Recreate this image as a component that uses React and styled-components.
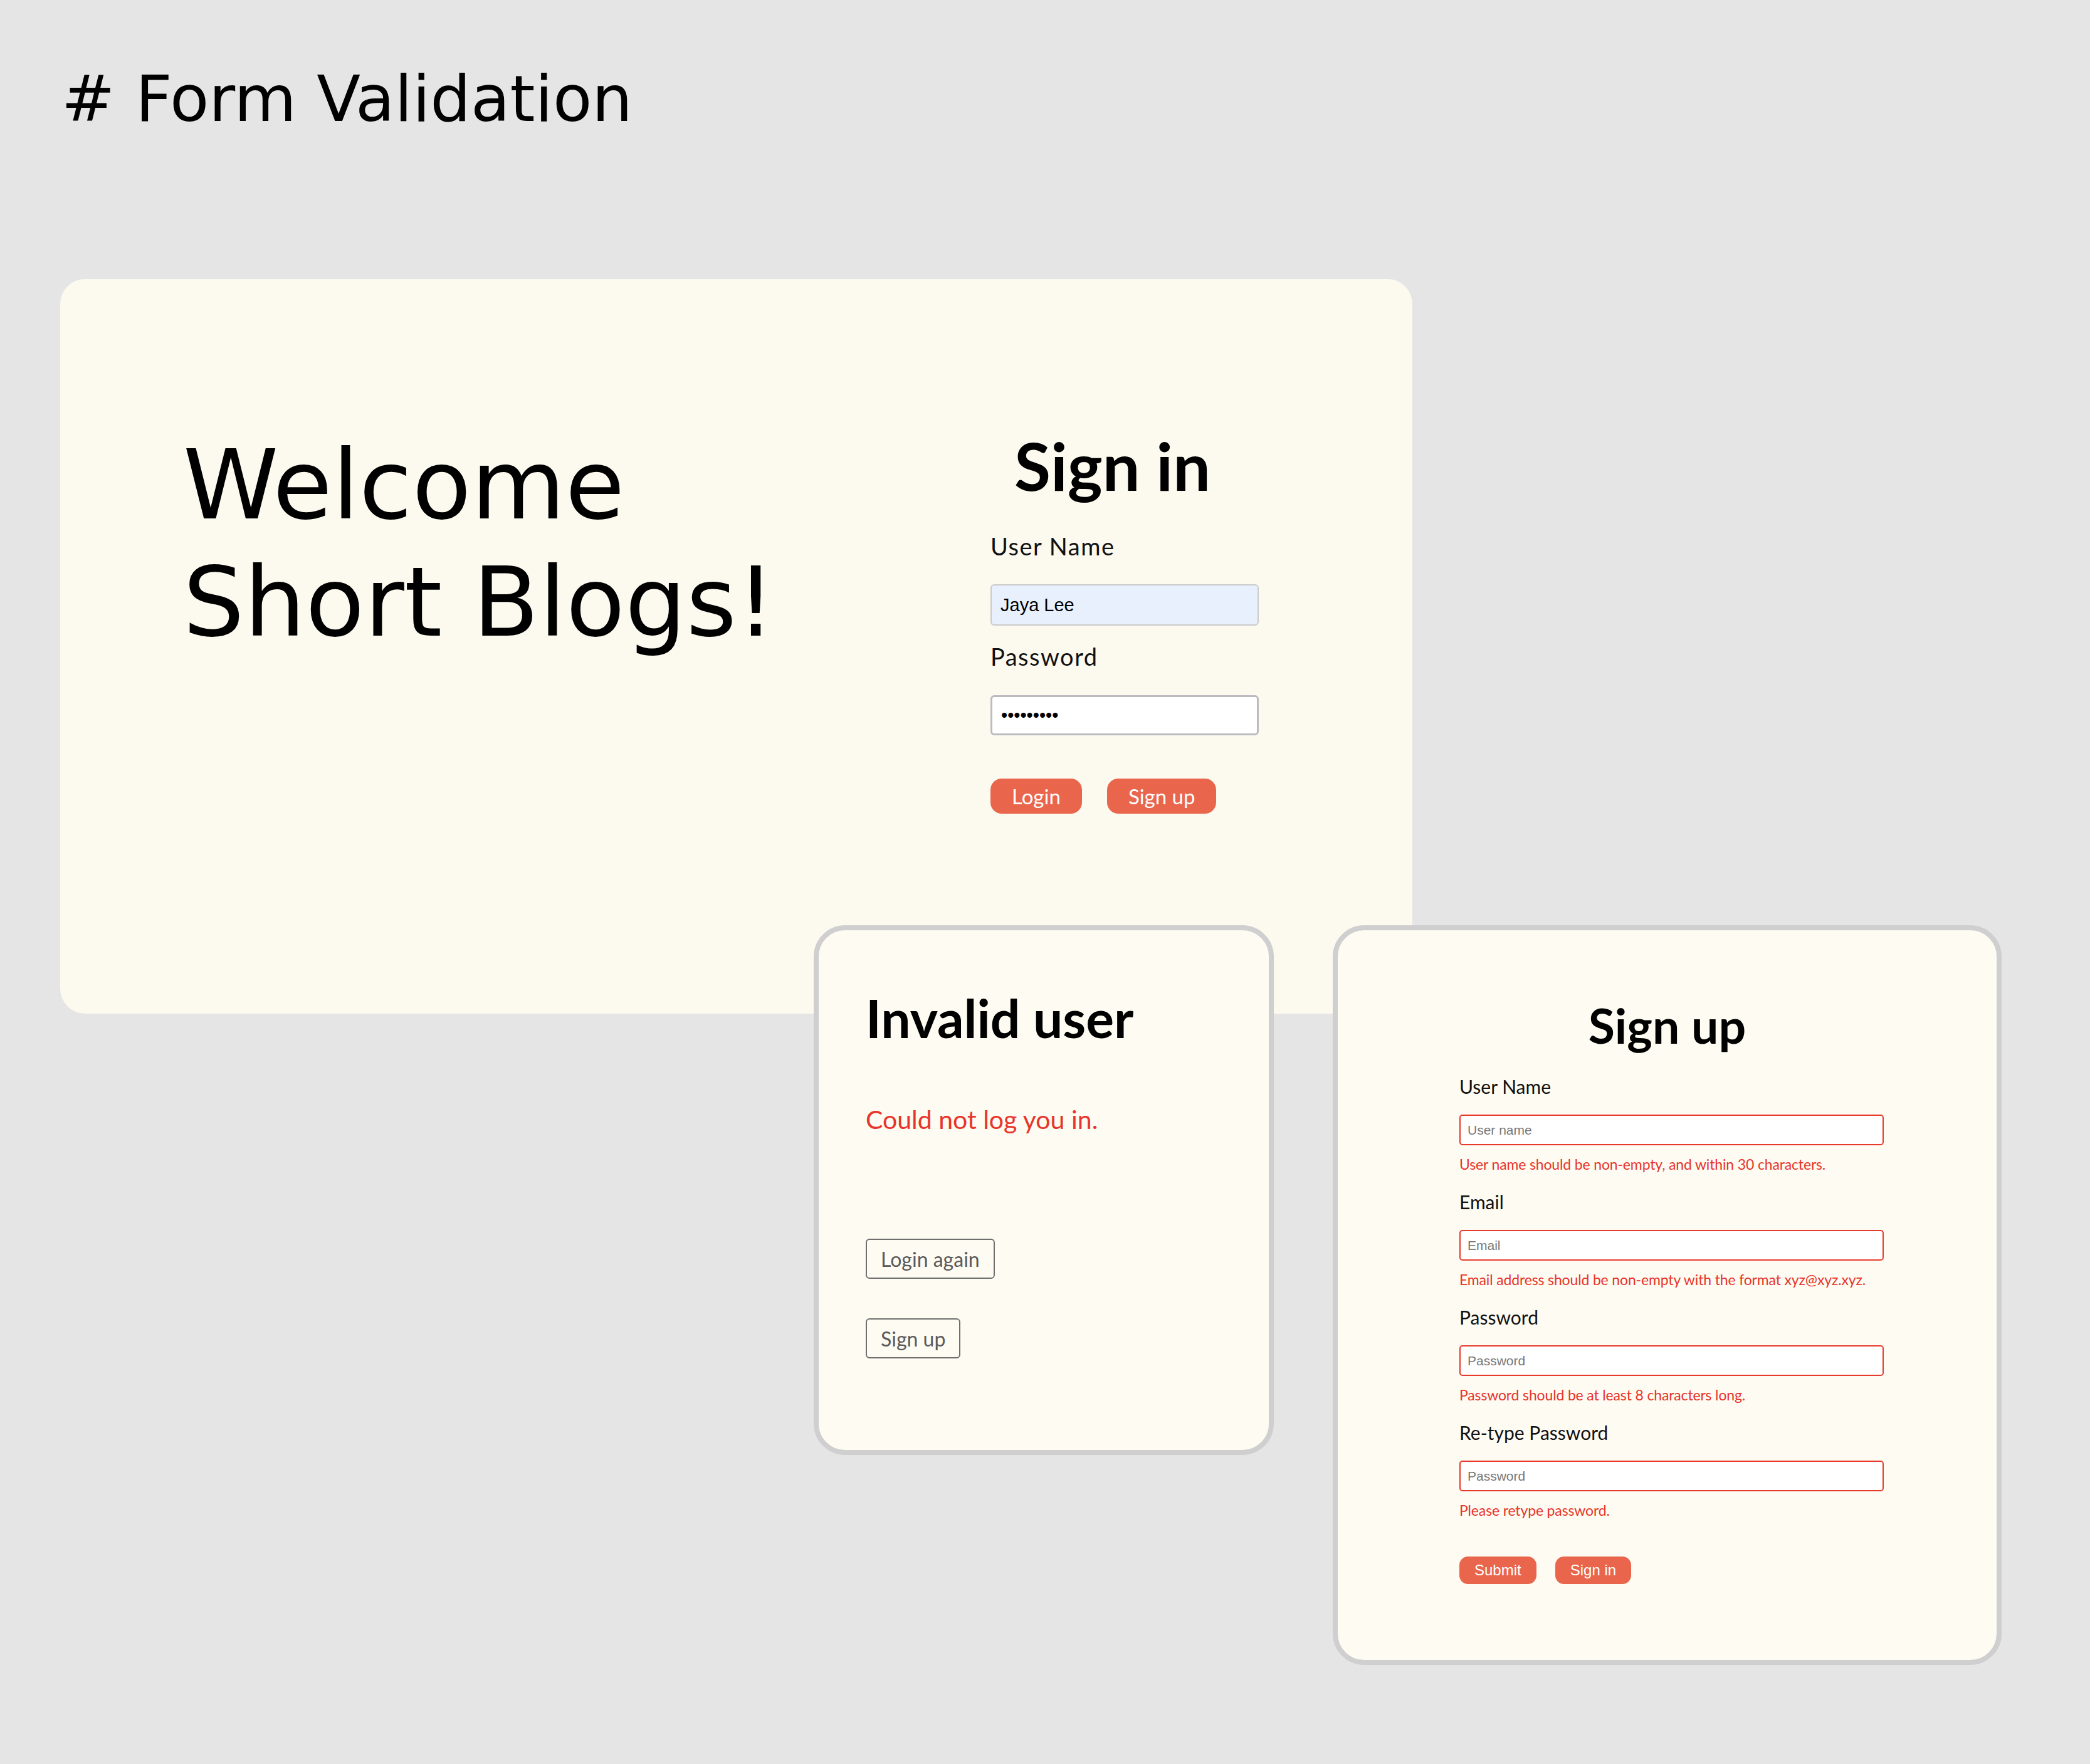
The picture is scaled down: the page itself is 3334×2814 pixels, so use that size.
import React from 'react'
import styled, { createGlobalStyle } from 'styled-components'

const GlobalStyle = createGlobalStyle`
  html, body {
    margin: 0;
    padding: 0;
    background: #e5e5e5;
  }
  * {
    box-sizing: border-box;
  }
`

const Page = styled.div`
  min-height: 2814px;
  padding: 107px 0 0 96px;
`

const PageTitle = styled.h1`
  margin: 0 0 0 2px;
  font-family: 'DejaVu Sans', sans-serif;
  font-weight: 400;
  font-size: 102px;
  line-height: 101px;
  color: #000;
`

const Stage = styled.div`
  margin-top: 237px;
`

const HeroCard = styled.section`
  width: 2157px;
  height: 1172px;
  padding: 235px 0 0 196px;
  border-radius: 40px;
  background: #fcf9ef;
  display: grid;
  grid-template-columns: 1288px 428px;
  align-items: start;
`

const Welcome = styled.h2`
  margin: 0;
  font-family: 'DejaVu Sans', sans-serif;
  font-weight: 400;
  font-size: 154px;
  line-height: 187px;
  color: #000;
`

const SignInForm = styled.form`
  margin-top: 9px;
  display: flex;
  flex-direction: column;
  align-items: flex-start;
`

const SignInTitle = styled.h2`
  margin: 0 0 0 38px;
  font-family: Lato, sans-serif;
  font-weight: 700;
  font-size: 106px;
  line-height: 106px;
  color: #000;
`

const SignInLabel = styled.label`
  margin-top: ${props => props.$top}px;
  font-family: Lato, sans-serif;
  font-size: 38px;
  line-height: 38px;
  letter-spacing: 1.5px;
  color: #111;
`

const SignInInput = styled.input`
  margin-top: ${props => props.$top}px;
  width: 428px;
  height: ${props => (props.$focused ? 64 : 66)}px;
  padding: 0 14px;
  border: ${props => (props.$focused ? '3px solid #bcbcc0' : '2px solid #cacaca')};
  border-radius: 6px;
  background: ${props => (props.$focused ? '#fff' : '#e8f0fe')};
  font-family: 'Liberation Sans', Arial, sans-serif;
  font-size: 29px;
  color: #000;
  outline: none;
`

const PillRow = styled.div`
  display: flex;
  gap: ${props => props.$gap}px;
  margin-top: ${props => props.$top}px;
`

const PillButton = styled.button`
  height: ${props => (props.$small ? 44 : 56)}px;
  padding: 0 ${props => (props.$small ? 24 : 34)}px;
  border: none;
  border-radius: ${props => (props.$small ? 14 : 18)}px;
  background: #e9664d;
  color: #fff;
  font-family: ${props => (props.$small ? "'Liberation Sans', Arial, sans-serif" : 'Lato, sans-serif')};
  font-size: ${props => (props.$small ? 24 : 33)}px;
  cursor: pointer;
`

const CardRow = styled.div`
  position: relative;
  margin: -141px 0 0 1202px;
  display: flex;
  align-items: flex-start;
  gap: 94px;
`

const Panel = styled.section`
  width: ${props => props.$w}px;
  height: ${props => props.$h}px;
  border: 8px solid #cfcfcf;
  border-radius: 50px;
  background: #fdfbf2;
  display: flex;
  flex-direction: column;
`

const InvalidBody = styled.div`
  padding: 98px 0 0 75px;
  display: flex;
  flex-direction: column;
  align-items: flex-start;
`

const PanelTitle = styled.h2`
  margin: 0;
  font-family: Lato, sans-serif;
  font-weight: 700;
  font-size: ${props => props.$size}px;
  line-height: ${props => props.$size}px;
  text-align: ${props => (props.$center ? 'center' : 'left')};
  color: #000;
`

const ErrorMessage = styled.p`
  margin: 99px 0 0;
  font-family: Lato, sans-serif;
  font-size: 41px;
  line-height: 41px;
  color: #e8342a;
`

const OutlineStack = styled.div`
  margin-top: 170px;
  display: flex;
  flex-direction: column;
  align-items: flex-start;
  gap: 63px;
`

const OutlineButton = styled.button`
  height: 64px;
  padding: 0 22px;
  border: 2px solid #6f6f6f;
  border-radius: 6px;
  background: transparent;
  font-family: Lato, sans-serif;
  font-size: 32px;
  color: #5a5a5a;
  cursor: pointer;
`

const SignUpBody = styled.div`
  padding-top: 113px;
  display: flex;
  flex-direction: column;
`

const SignUpForm = styled.form`
  margin-top: 44px;
  padding-left: 194px;
  display: flex;
  flex-direction: column;
  align-items: flex-start;
`

const Field = styled.div`
  display: flex;
  flex-direction: column;
  align-items: flex-start;
  margin-bottom: 33px;
`

const SignUpLabel = styled.label`
  font-family: Lato, sans-serif;
  font-size: 30px;
  line-height: 30px;
  color: #111;
`

const SignUpInput = styled.input`
  margin-top: 30px;
  width: 677px;
  height: 49px;
  padding: 0 11px;
  border: 2px solid #e8392b;
  border-radius: 5px;
  background: #fff;
  font-family: 'Liberation Sans', Arial, sans-serif;
  font-size: 21px;
  outline: none;

  &::placeholder {
    color: #777;
  }
`

const FieldError = styled.span`
  margin-top: 18px;
  font-family: Lato, sans-serif;
  font-size: 23px;
  line-height: 24px;
  letter-spacing: -0.15px;
  color: #e8342a;
`

const signUpFields = [
  { label: 'User Name', placeholder: 'User name', error: 'User name should be non-empty, and within 30 characters.' },
  { label: 'Email', placeholder: 'Email', error: 'Email address should be non-empty with the format xyz@xyz.xyz.' },
  { label: 'Password', placeholder: 'Password', error: 'Password should be at least 8 characters long.' },
  { label: 'Re-type Password', placeholder: 'Password', error: 'Please retype password.' },
]

export default function App() {
  return (
    <Page>
      <GlobalStyle />
      <PageTitle># Form Validation</PageTitle>
      <Stage>
        <HeroCard>
          <Welcome>
            Welcome
            <br />
            Short Blogs!
          </Welcome>
          <SignInForm onSubmit={e => e.preventDefault()}>
            <SignInTitle>Sign in</SignInTitle>
            <SignInLabel $top={57}>User Name</SignInLabel>
            <SignInInput $top={42} type="text" defaultValue="Jaya Lee" />
            <SignInLabel $top={30}>Password</SignInLabel>
            <SignInInput $top={43} $focused type="password" defaultValue="secret123" />
            <PillRow $gap={40} $top={69}>
              <PillButton type="button">Login</PillButton>
              <PillButton type="button">Sign up</PillButton>
            </PillRow>
          </SignInForm>
        </HeroCard>

        <CardRow>
          <Panel $w={734} $h={845}>
            <InvalidBody>
              <PanelTitle $size={84}>Invalid user</PanelTitle>
              <ErrorMessage>Could not log you in.</ErrorMessage>
              <OutlineStack>
                <OutlineButton type="button">Login again</OutlineButton>
                <OutlineButton type="button">Sign up</OutlineButton>
              </OutlineStack>
            </InvalidBody>
          </Panel>

          <Panel $w={1067} $h={1180}>
            <SignUpBody>
              <PanelTitle $size={77} $center>Sign up</PanelTitle>
              <SignUpForm onSubmit={e => e.preventDefault()}>
                {signUpFields.map(f => (
                  <Field key={f.label}>
                    <SignUpLabel>{f.label}</SignUpLabel>
                    <SignUpInput type="text" placeholder={f.placeholder} />
                    <FieldError>{f.error}</FieldError>
                  </Field>
                ))}
                <PillRow $gap={30} $top={29}>
                  <PillButton $small type="button">Submit</PillButton>
                  <PillButton $small type="button">Sign in</PillButton>
                </PillRow>
              </SignUpForm>
            </SignUpBody>
          </Panel>
        </CardRow>
      </Stage>
    </Page>
  )
}
